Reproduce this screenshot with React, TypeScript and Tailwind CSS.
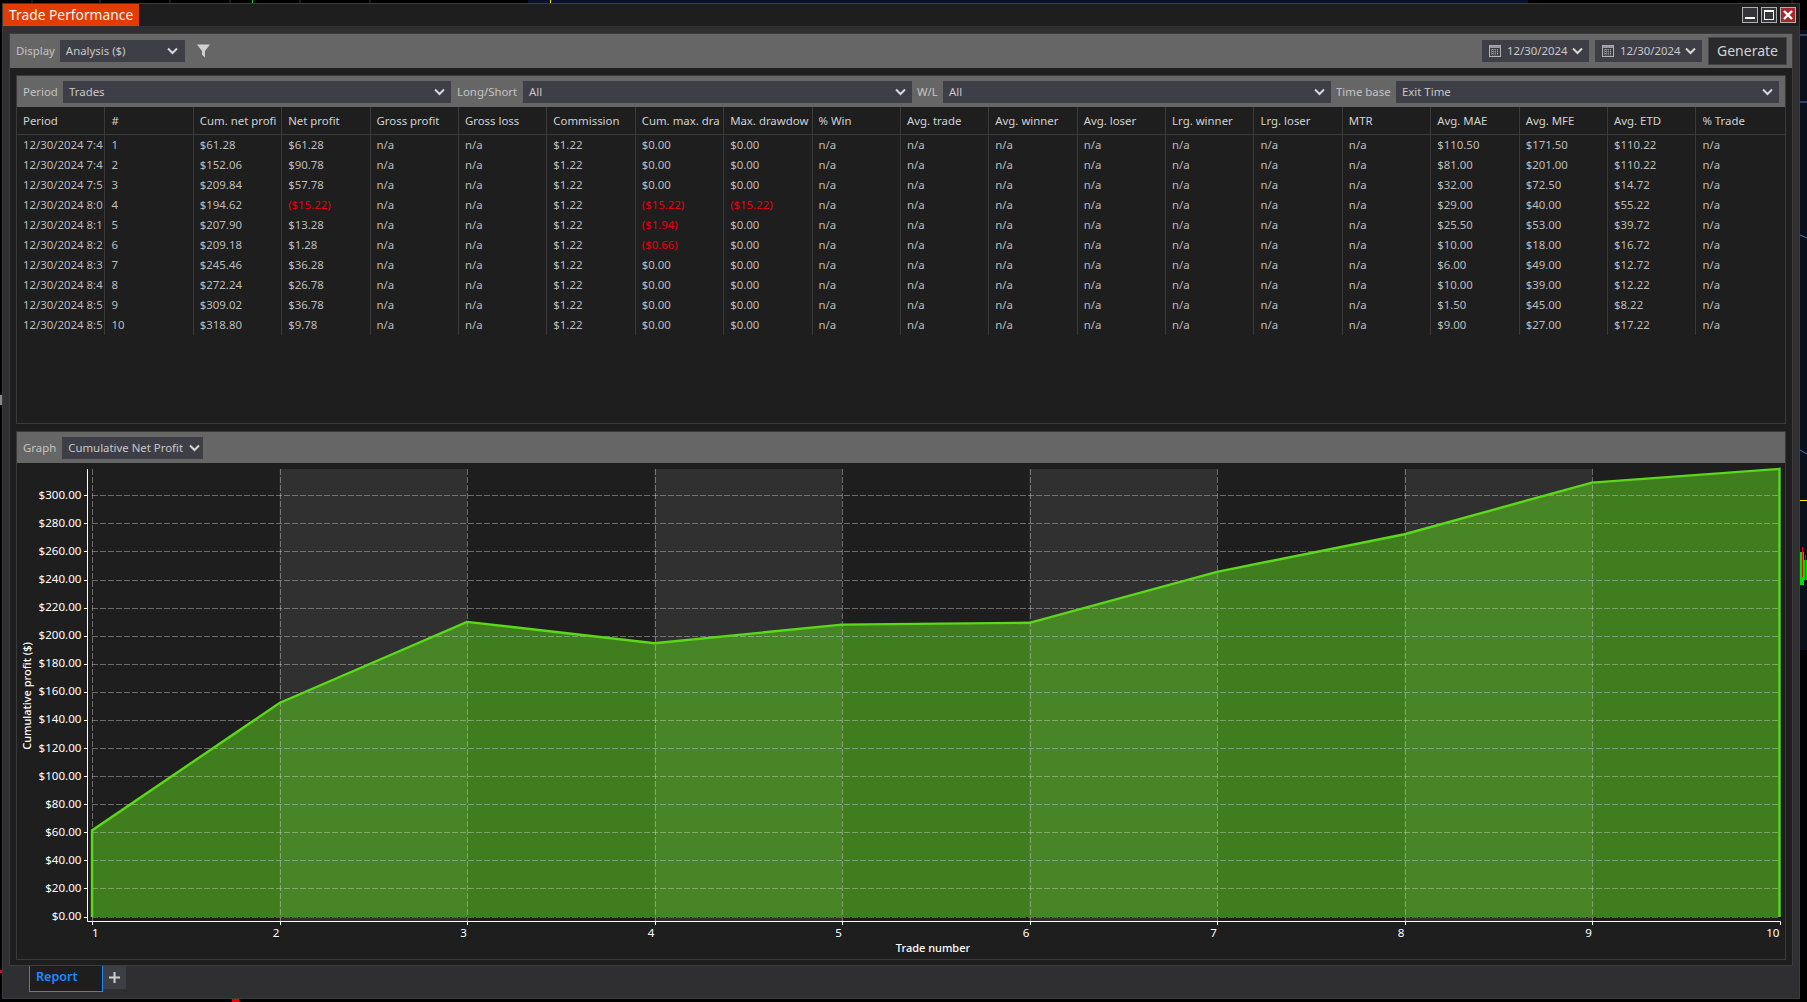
import React from 'react';

const font = "font-['Noto_Sans','Open_Sans',sans-serif]";

const headers = [
  'Period', '#', 'Cum. net profi', 'Net profit', 'Gross profit', 'Gross loss', 'Commission',
  'Cum. max. dra', 'Max. drawdow', '% Win', 'Avg. trade', 'Avg. winner', 'Avg. loser',
  'Lrg. winner', 'Lrg. loser', 'MTR', 'Avg. MAE', 'Avg. MFE', 'Avg. ETD', '% Trade',
];

const trades = [
  { period: '12/30/2024 7:4', cum: '$61.28', net: '$61.28', cumDd: '$0.00', maxDd: '$0.00', mae: '$110.50', mfe: '$171.50', etd: '$110.22' },
  { period: '12/30/2024 7:4', cum: '$152.06', net: '$90.78', cumDd: '$0.00', maxDd: '$0.00', mae: '$81.00', mfe: '$201.00', etd: '$110.22' },
  { period: '12/30/2024 7:5', cum: '$209.84', net: '$57.78', cumDd: '$0.00', maxDd: '$0.00', mae: '$32.00', mfe: '$72.50', etd: '$14.72' },
  { period: '12/30/2024 8:0', cum: '$194.62', net: '($15.22)', cumDd: '($15.22)', maxDd: '($15.22)', mae: '$29.00', mfe: '$40.00', etd: '$55.22' },
  { period: '12/30/2024 8:1', cum: '$207.90', net: '$13.28', cumDd: '($1.94)', maxDd: '$0.00', mae: '$25.50', mfe: '$53.00', etd: '$39.72' },
  { period: '12/30/2024 8:2', cum: '$209.18', net: '$1.28', cumDd: '($0.66)', maxDd: '$0.00', mae: '$10.00', mfe: '$18.00', etd: '$16.72' },
  { period: '12/30/2024 8:3', cum: '$245.46', net: '$36.28', cumDd: '$0.00', maxDd: '$0.00', mae: '$6.00', mfe: '$49.00', etd: '$12.72' },
  { period: '12/30/2024 8:4', cum: '$272.24', net: '$26.78', cumDd: '$0.00', maxDd: '$0.00', mae: '$10.00', mfe: '$39.00', etd: '$12.22' },
  { period: '12/30/2024 8:5', cum: '$309.02', net: '$36.78', cumDd: '$0.00', maxDd: '$0.00', mae: '$1.50', mfe: '$45.00', etd: '$8.22' },
  { period: '12/30/2024 8:5', cum: '$318.80', net: '$9.78', cumDd: '$0.00', maxDd: '$0.00', mae: '$9.00', mfe: '$27.00', etd: '$17.22' },
];

const Chevron = () => (
  <svg width="11" height="8" viewBox="0 0 11 8" className="shrink-0">
    <polyline points="1,1.5 5.5,6 10,1.5" fill="none" stroke="#d6d6d6" strokeWidth="2" />
  </svg>
);

const CalendarIcon = () => (
  <svg width="12" height="12" viewBox="0 0 12 12" className="shrink-0">
    <rect x="0.5" y="0.5" width="11" height="11" fill="#3e3e46" stroke="#b4b4b4" />
    <rect x="0.5" y="0.5" width="11" height="2.5" fill="#9a9a9a" />
    <path d="M2 5h8M2 7h8M2 9h8M3.5 4v6.5M6 4v6.5M8.5 4v6.5" stroke="#a0a0a0" strokeWidth="1" strokeDasharray="1 1" />
  </svg>
);

const Select: React.FC<{ label: string; className?: string }> = ({ label, className }) => (
  <div className={`flex h-[22px] items-center justify-between whitespace-nowrap bg-[#3e3e46] text-[#c8c8c8] ${className ?? ''}`}>
    <span>{label}</span>
    <Chevron />
  </div>
);

const DateSelect = () => (
  <div className="flex h-[22px] w-[107px] items-center bg-[#3e3e46] pl-[7px] pr-[6px] text-[#c8c8c8]">
    <CalendarIcon />
    <span className="ml-[6px] flex-1">12/30/2024</span>
    <Chevron />
  </div>
);

const Label: React.FC<{ children: React.ReactNode; className?: string }> = ({ children, className }) => (
  <span className={`shrink-0 text-[#c4c4c4] ${className ?? ''}`}>{children}</span>
);

const WindowButton: React.FC<{ children: React.ReactNode; red?: boolean }> = ({ children, red }) => (
  <div className={`flex h-4 w-4 items-center justify-center border border-[#b0b0b0] ${red ? 'bg-[#a8262c]' : 'bg-[#34343a]'}`}>
    {children}
  </div>
);

const Cell: React.FC<{ value: string }> = ({ value }) => (
  <td className={`overflow-hidden whitespace-nowrap border-r border-[#3a3a3a] pl-[6px] last:border-r-0 ${value.startsWith('(') ? 'text-[#e8000b]' : ''}`}>
    {value}
  </td>
);

const TradeTable = () => (
  <table className="w-full table-fixed border-separate border-spacing-0">
    <thead>
      <tr className="h-[28px]">
        {headers.map((h) => (
          <th key={h} className="overflow-hidden whitespace-nowrap border-r border-b border-[#3a3a3a] pl-[6px] text-left font-normal text-[#cfd3d6] last:border-r-0">
            {h}
          </th>
        ))}
      </tr>
    </thead>
    <tbody className="text-[#bdbdbd]">
      {trades.map((t, i) => (
        <tr key={i} className="h-5">
          <Cell value={t.period} />
          <Cell value={String(i + 1)} />
          <Cell value={t.cum} />
          <Cell value={t.net} />
          <Cell value="n/a" />
          <Cell value="n/a" />
          <Cell value="$1.22" />
          <Cell value={t.cumDd} />
          <Cell value={t.maxDd} />
          <Cell value="n/a" />
          <Cell value="n/a" />
          <Cell value="n/a" />
          <Cell value="n/a" />
          <Cell value="n/a" />
          <Cell value="n/a" />
          <Cell value="n/a" />
          <Cell value={t.mae} />
          <Cell value={t.mfe} />
          <Cell value={t.etd} />
          <Cell value="n/a" />
        </tr>
      ))}
    </tbody>
  </table>
);

// chart geometry, in page pixels (the svg viewBox starts at the panel's corner)
const xAt = (n: number) => 92 + (n - 1) * 187.5;
const yAt = (v: number) => 916.5 - v * 1.404;
const values = [61.28, 152.06, 209.84, 194.62, 207.9, 209.18, 245.46, 272.24, 309.02, 318.8];
const ticks = Array.from({ length: 16 }, (_, i) => i * 20);

const ProfitChart = () => {
  const line = values.map((v, i) => `${xAt(i + 1)},${yAt(v)}`).join(' ');
  const area = `${xAt(1)},917 ${line} ${xAt(10)},917`;
  return (
    <svg viewBox="17 463 1768 496" className="block h-[496px] w-[1768px]" style={{ fontFamily: "'Noto Sans', sans-serif" }}>
      {[2, 4, 6, 8].map((n) => (
        <rect key={n} x={xAt(n)} y="469" width="187.5" height="452" fill="#303030" />
      ))}
      <polygon points={area} fill="#59c81e" fillOpacity="0.56" />
      <line x1="92" y1="917.5" x2="1781" y2="917.5" stroke="#000" strokeWidth="1" />
      {ticks.map((v) => (
        <line key={v} x1="92" x2="1780" y1={Math.round(yAt(v)) + 0.5} y2={Math.round(yAt(v)) + 0.5} stroke="#cfcfcf" strokeOpacity="0.45" strokeDasharray="6 2" />
      ))}
      {[1, 2, 3, 4, 5, 6, 7, 8, 9].map((n) => (
        <line key={n} x1={Math.round(xAt(n)) + 0.5} x2={Math.round(xAt(n)) + 0.5} y1="469" y2="925" stroke="#cfcfcf" strokeOpacity="0.45" strokeDasharray="6 2" />
      ))}
      <polyline points={`${xAt(1)},917 ${line} ${xAt(10)},917`} fill="none" stroke="#5bd81a" strokeWidth="2.4" />
      {/* axes */}
      <path d="M87.5 469V921.5H1780.5V925" fill="none" stroke="#fff" />
      {[1, 2, 3, 4, 5, 6, 7, 8, 9].map((n) => (
        <line key={n} x1={Math.round(xAt(n)) + 0.5} x2={Math.round(xAt(n)) + 0.5} y1="922" y2="925" stroke="#fff" />
      ))}
      {ticks.map((v) => (
        <g key={v}>
          <line x1="84" x2="87" y1={Math.round(yAt(v)) + 0.5} y2={Math.round(yAt(v)) + 0.5} stroke="#fff" />
          <text x="81.5" y={yAt(v) + 3.5} textAnchor="end" fontSize="11.6" fill="#fff">{`$${v}.00`}</text>
        </g>
      ))}
      {values.map((_, i) => (
        <text key={i} x={i === 0 ? 92 : xAt(i + 1)} y="937" textAnchor={i === 0 ? 'start' : 'end'} fontSize="11.6" fill="#fff">
          {i + 1}
        </text>
      ))}
      <text x="933" y="952" textAnchor="middle" fontSize="11" fontWeight="500" fill="#fff">Trade number</text>
      <text transform="translate(30.5 696) rotate(-90)" textAnchor="middle" fontSize="11" fontWeight="500" fill="#fff">Cumulative profit ($)</text>
    </svg>
  );
};

// sliver of the trading chart behind the window
const BackgroundChart = () => (
  <svg className="absolute inset-0" width="1807" height="1002" viewBox="0 0 1807 1002">
    <rect x="528" y="0" width="1000" height="3" fill="#0a1030" />
    <rect x="1800" y="30" width="7" height="620" fill="#0a0f1c" />
    <path d="M32 0v3M100 0v3M170 0v3M230 0v3M300 0v3M370 0v3M1792 0v3" stroke="#333" />
    <line x1="252.5" y1="0" x2="252.5" y2="3" stroke="#1cd11c" />
    <line x1="550.5" y1="0" x2="550.5" y2="3" stroke="#ffee00" />
    <line x1="1800" y1="500.5" x2="1807" y2="500.5" stroke="#ffee00" />
    <path d="M1800 450l7 4M1800 235l7 3M1800 35h7M1800 102h7" stroke="#5577bb" fill="none" />
    <rect x="1800" y="552" width="4" height="33" fill="#00e000" />
    <rect x="1804" y="560" width="3" height="20" fill="#00e000" />
    <path d="M1802.5 547v30M1805.5 555v25" stroke="#e00000" />
    <rect x="232" y="999" width="7" height="3" fill="#e80000" />
    <rect x="0" y="970" width="2" height="3" fill="#c01818" />
    <rect x="0" y="395" width="2" height="10" fill="#888" />
  </svg>
);

const App: React.FC = () => {
  return (
    <div className={`relative h-[1002px] w-[1807px] overflow-hidden bg-black text-[11.4px] ${font}`}>
      <BackgroundChart />
      <div className="relative ml-[2px] mt-[3px] flex h-[996px] w-[1798px] flex-col border border-[#3c3c3c] bg-[#2f2f32]">
        {/* title row */}
        <div className="flex h-[23px] shrink-0 items-center justify-between border-b border-[#333] bg-[#1e1e1e] pr-[3px]">
          <div className="flex h-[22px] w-[136px] items-center bg-[#e23d00] pl-[6px] text-[13.8px] text-[#f4f4f4]">
            Trade Performance
          </div>
          <div className="flex gap-[3px]">
            <WindowButton>
              <div className="mt-[6px] h-[2px] w-[10px] bg-white" />
            </WindowButton>
            <WindowButton>
              <div className="h-[10px] w-[10px] border border-t-2 border-white" />
            </WindowButton>
            <WindowButton red>
              <svg width="10" height="10" viewBox="0 0 10 10">
                <path d="M1 1l8 8M9 1l-8 8" stroke="#fff" strokeWidth="2.4" />
              </svg>
            </WindowButton>
          </div>
        </div>

        {/* main panel */}
        <div className="mx-[6px] mt-[6px] flex h-[933px] flex-col border border-[#3c3c3c] bg-[#1e1e1e]">
          <div className="flex h-[34px] shrink-0 items-center bg-[#666666] pl-[6px] pr-[5px]">
            <Label>Display</Label>
            <Select label="Analysis ($)" className="ml-[5px] w-[125px] pl-[6px] pr-[7px]" />
            <svg width="13" height="16" viewBox="0 0 14 16" className="ml-[12px]">
              <polygon points="0,1 14,1 8.6,8 8.6,15 5.4,12 5.4,8" fill="#d0d0d0" />
            </svg>
            <div className="ml-auto flex items-center gap-[6px]">
              <DateSelect />
              <DateSelect />
              <div className="flex h-7 w-[79px] items-center justify-center border border-[#454545] bg-[#2a2a2c] pb-[2px] text-[14px] text-[#cfd3d6]">
                Generate
              </div>
            </div>
          </div>

          <div className="flex flex-1 flex-col gap-[7px] px-[6px] pt-[7px]">
            {/* table panel */}
            <div className="h-[349px] border border-[#3a3a3a]">
              <div className="flex h-[31px] items-center bg-[#666666] pl-[6px] pr-[6px]">
                <Label className="w-[40px]">Period</Label>
                <Select label="Trades" className="w-[388px] pl-[6px] pr-[6px]" />
                <Label className="ml-[6px] w-[66px]">Long/Short</Label>
                <Select label="All" className="w-[389px] pl-[6px] pr-[6px]" />
                <Label className="ml-[5px] w-[26px]">W/L</Label>
                <Select label="All" className="w-[388px] pl-[6px] pr-[6px]" />
                <Label className="ml-[5px] w-[60px]">Time base</Label>
                <Select label="Exit Time" className="min-w-0 flex-1 pl-[6px] pr-[6px]" />
              </div>
              <TradeTable />
            </div>

            {/* graph panel */}
            <div className="border border-[#3a3a3a]">
              <div className="flex h-[31px] items-center gap-[6px] bg-[#666666] pl-[6px]">
                <Label>Graph</Label>
                <Select label="Cumulative Net Profit" className="w-[141px] gap-[6px] pl-[6px] pr-[4px]" />
              </div>
              <ProfitChart />
            </div>
          </div>
        </div>

        {/* tabs */}
        <div className="ml-[26px] flex items-start">
          <div className="flex h-[26px] w-[74px] items-center border-x border-b border-[#1a8cff] bg-[#1e1e1e] pb-[3px] pl-[6px] text-[12.6px] font-semibold text-[#1a8cff]">
            Report
          </div>
          <div className="flex h-[23px] w-[23px] items-center justify-center bg-[#3e3e46]">
            <svg width="11" height="11" viewBox="0 0 11 11">
              <path d="M5.5 0v11M0 5.5h11" stroke="#cfcfcf" strokeWidth="2" />
            </svg>
          </div>
        </div>
      </div>
    </div>
  );
};

export default App;
